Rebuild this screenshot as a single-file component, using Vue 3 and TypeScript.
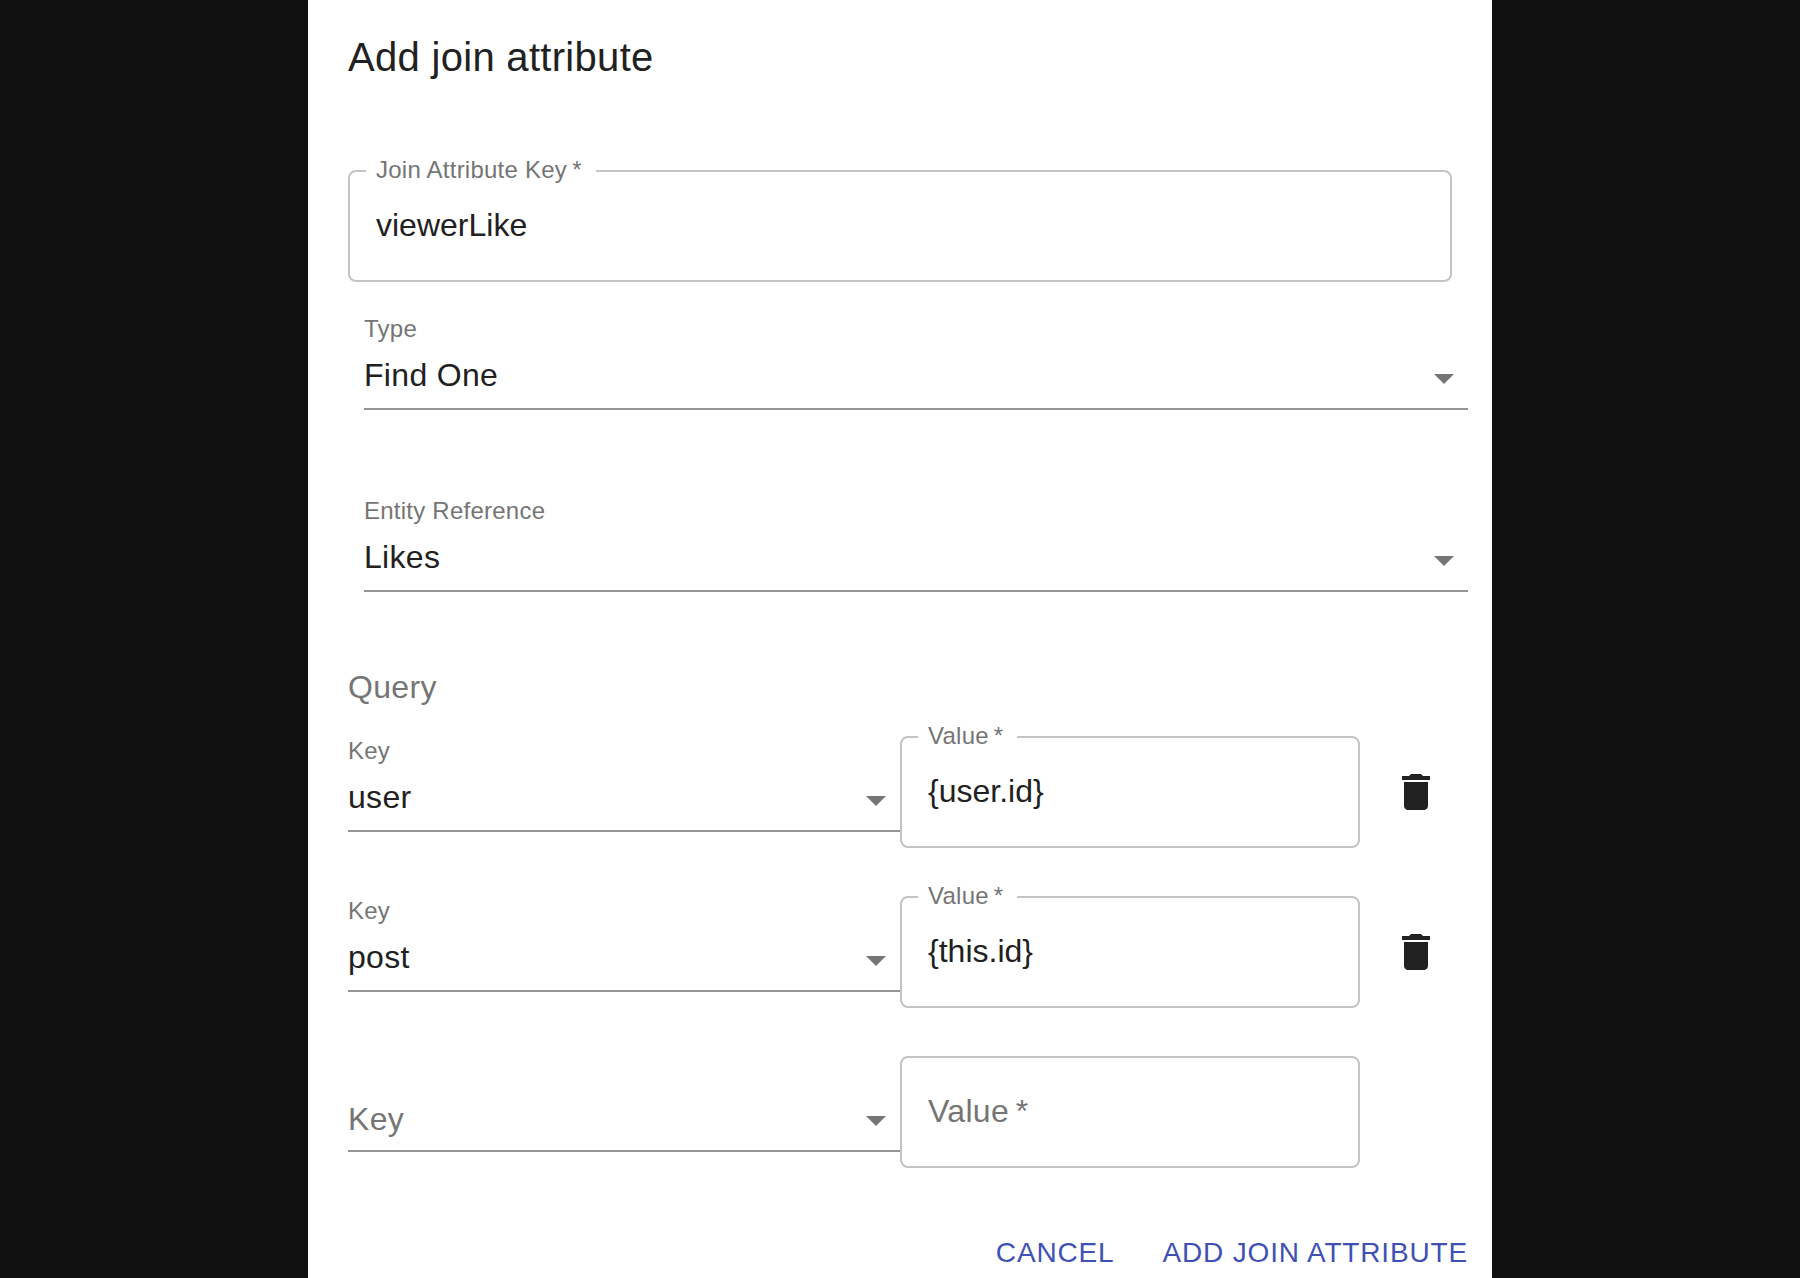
<script setup lang="ts">
import { reactive, ref } from 'vue'

interface QueryRow {
  key: string
  value: string
  removable: boolean
}

const attributeKey = ref('viewerLike')
const joinType = ref('Find One')
const entity = ref('Likes')

const joinTypes: string[] = ['Find One', 'Find Many', 'Count']
const entities: string[] = ['Likes', 'Posts', 'Users']
const keys: string[] = ['user', 'post']

const rows = reactive<QueryRow[]>([
  { key: 'user', value: '{user.id}', removable: true },
  { key: 'post', value: '{this.id}', removable: true },
  { key: '', value: '', removable: false },
])

function removeRow(index: number): void {
  rows.splice(index, 1)
}
</script>

<template>
  <div class="page">
    <form class="dialog" @submit.prevent>
      <h2 class="title">Add join attribute</h2>

      <div class="outlined">
        <label class="notch" for="attribute-key">Join Attribute Key&thinsp;*</label>
        <input id="attribute-key" v-model="attributeKey" type="text" required />
      </div>

      <div class="selects">
        <div class="standard">
          <label class="caption" for="join-type">Type</label>
          <div class="control">
            <select id="join-type" v-model="joinType">
              <option v-for="t in joinTypes" :key="t">{{ t }}</option>
            </select>
            <svg class="arrow" viewBox="0 0 24 24" aria-hidden="true"><path d="M7 10l5 5 5-5z" /></svg>
          </div>
        </div>
        <div class="standard">
          <label class="caption" for="entity">Entity Reference</label>
          <div class="control">
            <select id="entity" v-model="entity">
              <option v-for="e in entities" :key="e">{{ e }}</option>
            </select>
            <svg class="arrow" viewBox="0 0 24 24" aria-hidden="true"><path d="M7 10l5 5 5-5z" /></svg>
          </div>
        </div>
      </div>

      <h3 class="section">Query</h3>

      <div class="rows">
        <div v-for="(row, i) in rows" :key="i" class="row">
          <div class="standard" :class="{ empty: !row.key }">
            <label class="caption" :for="`key-${i}`">Key</label>
            <div class="control">
              <select :id="`key-${i}`" v-model="row.key">
                <option value=""></option>
                <option v-for="k in keys" :key="k">{{ k }}</option>
              </select>
              <svg class="arrow" viewBox="0 0 24 24" aria-hidden="true"><path d="M7 10l5 5 5-5z" /></svg>
            </div>
          </div>
          <div class="outlined" :class="{ empty: !row.value }">
            <label class="notch" :for="`value-${i}`">Value&thinsp;*</label>
            <input :id="`value-${i}`" v-model="row.value" type="text" required />
          </div>
          <button v-if="row.removable" class="delete" type="button" aria-label="Delete" @click="removeRow(i)">
            <svg viewBox="0 0 24 24" aria-hidden="true">
              <path d="M6 19c0 1.100.9 2 2 2h8c1.100 0 2-.9 2-2V7H6v12zM19 4h-3.500l-1-1h-5l-1 1H5v2h14V4z" />
            </svg>
          </button>
        </div>
      </div>

      <div class="actions">
        <button type="button">CANCEL</button>
        <button type="submit">ADD JOIN ATTRIBUTE</button>
      </div>
    </form>
  </div>
</template>

<style>
body {
  margin: 0;
  background: #111;
}
</style>

<style scoped>
.page {
  display: flex;
  justify-content: center;
  min-height: 100vh;
  background: #111;
  font-family: "Liberation Sans", Arial, sans-serif;
  color: #212121;
}

.dialog {
  box-sizing: border-box;
  width: 100%;
  max-width: 1184px;
  padding: 24px 40px 0;
  background: #fff;
}

.title {
  margin: 0 0 80px;
  font-size: 40px;
  font-weight: 400;
  line-height: 66px;
  letter-spacing: 0.0075em;
}

.outlined {
  position: relative;
  box-sizing: border-box;
  height: 112px;
  border: 2px solid #c4c4c4;
  border-radius: 8px;
}

.outlined input {
  box-sizing: border-box;
  display: block;
  width: 100%;
  height: 100%;
  margin: 0;
  padding: 0 26px 2px;
  border: 0;
  outline: 0;
  background: transparent;
  font: inherit;
  font-size: 32px;
  color: inherit;
}

.notch {
  position: absolute;
  top: -14px;
  left: 16px;
  padding: 0 14px 0 10px;
  background: #fff;
  font-size: 24px;
  line-height: 24px;
  letter-spacing: 0.01em;
  color: #757575;
  white-space: nowrap;
}

.outlined.empty .notch {
  top: 35px;
  font-size: 32px;
  line-height: 36px;
  pointer-events: none;
}

.selects {
  display: flex;
  flex-direction: column;
  gap: 86px;
  margin: 32px -16px 76px 16px;
}

.standard {
  position: relative;
}

.caption {
  display: block;
  margin-bottom: 2px;
  font-size: 24px;
  line-height: 30px;
  letter-spacing: 0.01em;
  color: #757575;
}

.standard.empty {
  padding-top: 32px;
}

.standard.empty .caption {
  position: absolute;
  top: 45px;
  left: 0;
  margin: 0;
  font-size: 32px;
  line-height: 36px;
  pointer-events: none;
}

.control {
  position: relative;
  box-sizing: border-box;
  height: 64px;
  border-bottom: 2px solid #949494;
}

.control select {
  appearance: none;
  box-sizing: border-box;
  display: block;
  width: 100%;
  height: 100%;
  margin: 0;
  padding: 0 48px 4px 0;
  border: 0;
  outline: 0;
  background: transparent;
  font: inherit;
  font-size: 32px;
  letter-spacing: 0.01em;
  color: inherit;
}

.arrow {
  position: absolute;
  top: 8px;
  right: 0;
  width: 48px;
  height: 48px;
  fill: #757575;
  pointer-events: none;
}

.section {
  margin: 0 0 30px;
  font-size: 32px;
  font-weight: 400;
  line-height: 38px;
  letter-spacing: 0.01em;
  color: #757575;
}

.rows {
  display: flex;
  flex-direction: column;
  gap: 48px;
}

.row {
  display: grid;
  grid-template-columns: minmax(0, 6fr) minmax(0, 5fr) minmax(0, 1fr);
  align-items: start;
}

.delete {
  align-self: center;
  width: 48px;
  height: 48px;
  margin: 0 0 0 32px;
  padding: 0;
  border: 0;
  background: transparent;
  cursor: pointer;
}

.delete svg {
  display: block;
  width: 48px;
  height: 48px;
  fill: #212121;
}

.actions {
  display: flex;
  justify-content: flex-end;
  gap: 16px;
  margin: 66px -32px 0 0;
}

.actions button {
  margin: 0;
  padding: 0 16px;
  border: 0;
  background: transparent;
  font: inherit;
  font-size: 28px;
  line-height: 38px;
  letter-spacing: 0.03em;
  color: #3f51b5;
  cursor: pointer;
}
</style>
